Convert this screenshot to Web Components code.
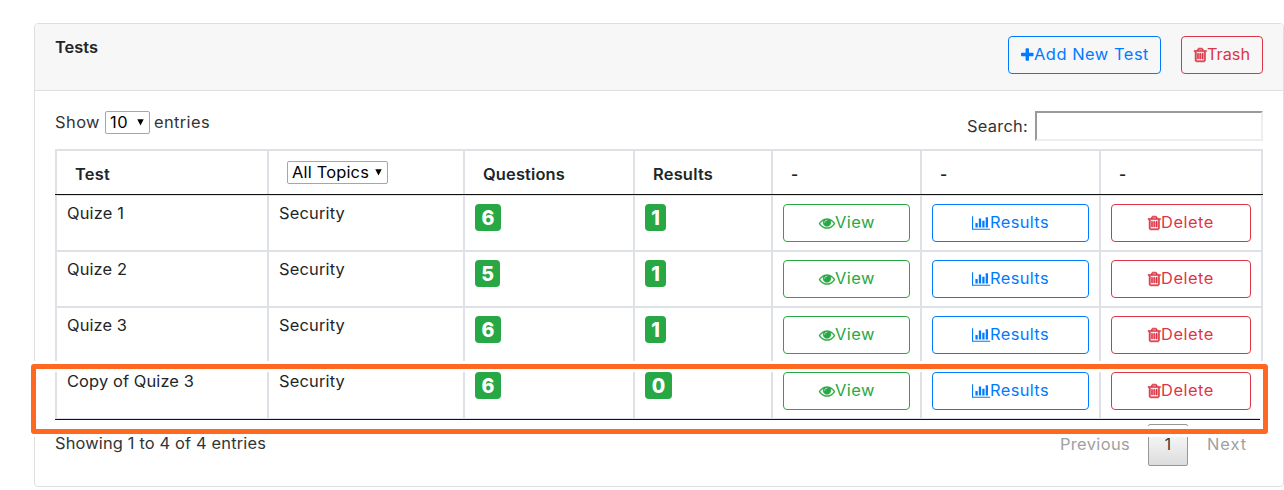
<!DOCTYPE html>
<html lang="en">
<head>
<meta charset="utf-8">
<title>Tests</title>
<style>
body{margin:0;background:#fff;height:490px;overflow:hidden;font-family:Inter,"Open Sans",sans-serif;font-size:15.5px;line-height:24px;color:#212529}
</style>
</head>
<body>
<tests-page></tests-page>
<script>
const define = (name, html, setup) => customElements.define(name, class extends HTMLElement {
  connectedCallback() {
    if (this.shadowRoot) return;
    const root = this.attachShadow({ mode: 'open' });
    const t = document.createElement('template');
    t.innerHTML = typeof html === 'function' ? html(this) : html;
    root.append(t.content.cloneNode(true));
    if (setup) setup(this, root);
  }
});

// Text that widens and tracks its letters to fill the width given in "w".
define('fit-label', `<style>:host{display:inline-block;white-space:nowrap}span{display:inline-block;transform-origin:0 50%}</style><span><slot></slot></span>`,
  (el, root) => {
    const span = root.querySelector('span'), w = +el.getAttribute('w');
    const natural = span.getBoundingClientRect().width, n = el.textContent.length;
    if (natural && n) {
      const k = Math.max(1, Math.min(1.06, w / natural));
      span.style.letterSpacing = ((w / k - natural) / n) + 'px';
      span.style.transform = `scaleX(${k})`;
    }
    el.style.width = w + 'px';
  });

const icons = {
  plus: [12.57, '192 0 1408 1792', 'M1600 736v192q0 40-28 68t-68 28h-416v416q0 40-28 68t-68 28h-192q-40 0-68-28t-28-68v-416h-416q-40 0-68-28t-28-68v-192q0-40 28-68t68-28h416v-416q0-40 28-68t68-28h192q40 0 68 28t28 68v416h416q40 0 68 28t28 68z'],
  eye: [16, '0 0 1792 1792', 'M1664 960q-152-236-381-353 61 104 61 225 0 185-131.5 316.5t-316.5 131.5-316.5-131.5-131.5-316.5q0-121 61-225-229 117-381 353 133 205 333.5 326.5t434.5 121.5 434.5-121.5 333.5-326.5zm-720-384q0-20-14-34t-34-14q-125 0-214.5 89.5t-89.5 214.5q0 20 14 34t34 14 34-14 14-34q0-86 61-147t147-61q20 0 34-14t14-34zm848 384q0 34-20 69-140 230-376.5 368.5t-499.5 138.5-499.5-139-376.5-368q-20-35-20-69t20-69q140-229 376.5-368t499.5-139 499.5 139 376.5 368q20 35 20 69z'],
  chart: [18.28, '0 0 2048 1792', 'M640 896v512h-256v-512h256zm384-512v1024h-256v-1024h256zm1024 1152v128h-2048v-1536h128v1408h1920zm-640-896v768h-256v-768h256zm384-384v1152h-256v-1152h256z'],
  trash: [12.57, '192 0 1408 1792', 'M704 736v576q0 14-9 23t-23 9h-64q-14 0-23-9t-9-23v-576q0-14 9-23t23-9h64q14 0 23 9t9 23zm256 0v576q0 14-9 23t-23 9h-64q-14 0-23-9t-9-23v-576q0-14 9-23t23-9h64q14 0 23 9t9 23zm256 0v576q0 14-9 23t-23 9h-64q-14 0-23-9t-9-23v-576q0-14 9-23t23-9h64q14 0 23 9t9 23zm128 724v-948h-896v948q0 22 7 40.5t14.5 27 10.5 8.5h832q3 0 10.5-8.5t14.5-27 7-40.5zm-672-1076h448l-48-117q-7-9-17-11h-317q-10 2-17 11zm928 32v64q0 14-9 23t-23 9h-96v948q0 83-47 143.5t-113 60.5h-832q-66 0-113-58.5t-47-141.5v-952h-96q-14 0-23-9t-9-23v-64q0-14 9-23t23-9h309l70-167q15-37 54-63t79-26h320q40 0 79 26t54 63l70 167h309q14 0 23 9t9 23z']
};
define('fa-icon', el => {
  const name = el.getAttribute('name'), [w, box, d] = icons[name];
  const weight = { trash: 70, eye: 30 }[name] || 0;
  return `<style>:host{display:block;flex:none}svg{display:block;overflow:visible}</style><svg width="${w}" height="16" viewBox="${box}" fill="currentColor" stroke="currentColor" stroke-width="${weight}"><path d="${d}"/></svg>`;
});

const tones = { green: '#28a745', blue: '#007bff', red: '#dc3545' };
define('outline-button', el => `<style>
  :host{display:flex;box-sizing:border-box;height:38px;align-items:center;justify-content:center;border:1px solid;border-radius:4px;color:${tones[el.getAttribute('tone')]}}
  fa-icon{margin-left:.5px}
  </style><fa-icon name="${el.getAttribute('icon')}"></fa-icon><fit-label w="${el.getAttribute('w')}">${el.getAttribute('label')}</fit-label>`);

define('count-badge', el => `<style>
  :host{display:block;box-sizing:border-box;height:27px;width:${{ 1: 21, 5: 25, 6: 26, 0: 27 }[el.getAttribute('value')]}px;border-radius:4px;background:#28a745;color:#fff;font-weight:800;font-size:19.5px;line-height:28px;text-align:center}
  </style>${el.getAttribute('value')}`);

define('select-box', el => `<style>
  :host{display:inline-flex;box-sizing:border-box;height:23px;border:1px solid #a6a6a6;border-radius:2px;background:#fff;color:#000;padding:0 5px 0 4px;align-items:center;justify-content:space-between;line-height:21px;font-weight:400}
  svg{display:block;margin-top:-1px}
  </style><fit-label w="${el.getAttribute('w')}">${el.getAttribute('label')}</fit-label><svg width="7" height="7" viewBox="0 0 7 7"><path d="M.3 .3H6.7L3.5 6.6z"/></svg>`);

define('table-row', `<style>
  :host{display:grid;box-sizing:border-box;height:56px;grid-template-columns:212px 196px 170px 138px 149px 179px 164px;border-bottom:2px solid #dee2e6}
  :host([first]){height:57px;border-top:1px solid #dee2e6}
  :host([last]){height:55px;border-bottom-width:1px}
  :host([head]){height:46px;border-top:2px solid #dee2e6;border-bottom:1px solid #111;font-weight:600}
  </style><slot></slot>`);
define('table-cell', `<style>
  :host{display:block;box-sizing:border-box;border-left:2px solid #dee2e6;padding:8px 10px}
  :host(:last-child){border-right:2px solid #dee2e6}
  :host([text]){padding-top:6px}
  :host([head]){padding:12px 18px 0}
  :host([filter]){padding-top:10px}
  </style><slot></slot>`);

const rows = [['Quize 1', 57, 6, 1], ['Quize 2', 60, 5, 1], ['Quize 3', 60, 6, 1], ['Copy of Quize 3', 127, 6, 0]];
define('tests-table', () => `<style>
  :host{display:block;width:1208px}
  .end{height:1px;width:1205px;background:#111}
  select-box{width:101px}
  </style>
  <table-row head>
    <table-cell head><fit-label w="35">Test</fit-label></table-cell>
    <table-cell head filter><select-box label="All Topics" w="77"></select-box></table-cell>
    <table-cell head><fit-label w="82">Questions</fit-label></table-cell>
    <table-cell head><fit-label w="60">Results</fit-label></table-cell>
    <table-cell head>-</table-cell><table-cell head>-</table-cell><table-cell head>-</table-cell>
  </table-row>` + rows.map(([name, w, q, r], i) => `
  <table-row ${i === 0 ? 'first' : i === 3 ? 'last' : ''}>
    <table-cell text><fit-label w="${w}">${name}</fit-label></table-cell>
    <table-cell text><fit-label w="66">Security</fit-label></table-cell>
    <table-cell><count-badge value="${q}"></count-badge></table-cell>
    <table-cell><count-badge value="${r}"></count-badge></table-cell>
    <table-cell><outline-button tone="green" icon="eye" label="View" w="40"></outline-button></table-cell>
    <table-cell><outline-button tone="blue" icon="chart" label="Results" w="59"></outline-button></table-cell>
    <table-cell><outline-button tone="red" icon="trash" label="Delete" w="53"></outline-button></table-cell>
  </table-row>`).join('') + `<div class="end"></div>`);

define('table-controls', `<style>
  :host{display:flex;height:38px;justify-content:space-between;align-items:flex-start;color:#333}
  .length{display:flex;align-items:center;height:23px}
  .length select-box{width:45px;margin:0 4px 0 5px}
  .search{display:flex;align-items:flex-start;height:30px}
  .search fit-label{padding-top:4px}
  .field{box-sizing:border-box;width:228px;height:30px;margin-left:7px;border:2px solid;border-color:#9a9a9a #eee #eee #9a9a9a}
  </style>
  <div class="length"><fit-label w="45">Show</fit-label><select-box label="10" w="18"></select-box><fit-label w="56">entries</fit-label></div>
  <div class="search"><fit-label w="61">Search:</fit-label><div class="field"></div></div>`);

define('table-footer', `<style>
  :host{display:flex;justify-content:space-between;color:#333}
  .info{padding-top:12px}
  .pages{display:flex;padding:4px 16px 0 0;color:#a0a0a0;line-height:42px}
  .current{box-sizing:border-box;width:40px;height:42px;margin:0 19px 0 18px;border:1px solid #979797;border-radius:2px;background:linear-gradient(#fff,#dcdcdc);color:#333;line-height:40px;text-align:center}
  </style>
  <div class="info"><fit-label w="211">Showing 1 to 4 of 4 entries</fit-label></div>
  <div class="pages"><fit-label w="70">Previous</fit-label><div class="current">1</div><fit-label w="40">Next</fit-label></div>`);

define('tests-card', `<style>
  :host{display:block;box-sizing:border-box;width:1250px;height:464px;border:1px solid #dfdfdf;border-radius:4px;background:#fff}
  header{display:flex;justify-content:space-between;box-sizing:border-box;height:67px;padding:12px 20px;background:#f7f7f7;border-bottom:1px solid #dfdfdf;border-radius:3px 3px 0 0;font-weight:600}
  .actions{display:flex;gap:20px;font-weight:400}
  .add{width:153px}.trash{width:82px}
  main{padding:20px 20px 0}
  </style>
  <header><fit-label w="43">Tests</fit-label>
    <div class="actions"><outline-button class="add" tone="blue" icon="plus" label="Add New Test" w="115"></outline-button><outline-button class="trash" tone="red" icon="trash" label="Trash" w="43"></outline-button></div>
  </header>
  <main><table-controls></table-controls><tests-table></tests-table><table-footer></table-footer></main>`);

// Outline laid over the copied test's row.
define('row-highlight', `<style>
  :host{position:absolute;left:31px;top:364px;box-sizing:border-box;width:1237px;height:70px;border:5px solid #ff6820;border-radius:3px;box-shadow:0 0 0 3px #fff,inset 0 0 0 3px #fff}
  </style>`);

define('tests-page', `<style>:host{display:block;position:relative;padding:23px 0 0 34px}</style><tests-card></tests-card><row-highlight></row-highlight>`);
</script>
</body>
</html>
